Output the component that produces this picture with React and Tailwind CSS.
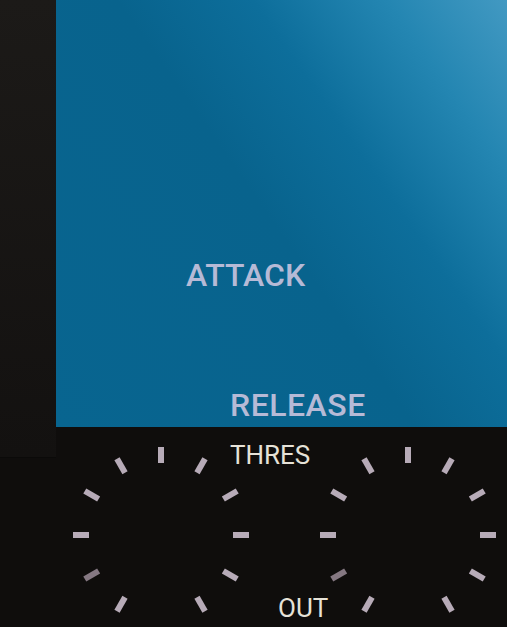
import React from 'react';

// tick angles in degrees, bottom one left out
const ANGLES = [90, 120, 150, 180, 210, 240, 60, 30, 0, -30, -60];

const Knob = ({ className }) => (
  <svg width="180" height="180" viewBox="0 0 180 180" className={className}>
    {ANGLES.map((a) => {
      const r = (a * Math.PI) / 180;
      const x1 = 90 + Math.cos(r) * 72;
      const y1 = 90 - Math.sin(r) * 72;
      const x2 = 90 + Math.cos(r) * 88;
      const y2 = 90 - Math.sin(r) * 88;
      return (
        <line
          key={a}
          x1={x1}
          y1={y1}
          x2={x2}
          y2={y2}
          stroke={a === 210 ? '#857882' : '#b7abb8'}
          strokeWidth="6"
        />
      );
    })}
  </svg>
);

export default function App() {
  return (
    <div className="w-[507px] h-[627px] overflow-hidden bg-[#0f0d0c] font-['Roboto',sans-serif]">
      {/* top: side strip + blue display */}
      <div className="flex h-[427px]">
        <div className="w-[56px] h-[458px] shrink-0 bg-[linear-gradient(to_bottom,#1c1a18,#131110)] border-b border-[#0b0a09]" />
        <div className="flex-1 flex flex-col bg-[linear-gradient(235deg,#4299c2_0%,#2486b2_16%,#0d6e9b_34%,#08638d_52%,#086590_100%)]">
          <div className="ml-[130px] mt-[259px] text-[32px] leading-[32px] font-medium text-[#b6bad6]">
            ATTACK
          </div>
          <div className="ml-[174px] mt-[98px] text-[32px] leading-[32px] font-medium text-[#b6bad6] tracking-[0.5px]">
            RELEASE
          </div>
        </div>
      </div>

      {/* bottom: two knobs with labels between */}
      <div className="relative z-10 flex pt-[18px]">
        <Knob className="ml-[71px] shrink-0" />
        <div className="w-[67px] shrink-0 flex flex-col">
          <div className="ml-[-21px] mt-[-3px] text-[26px] leading-[26px] text-[#e6e2d8] whitespace-nowrap">
            THRES
          </div>
          <div className="ml-[27px] mt-[127px] text-[26px] leading-[26px] text-[#e6e2d8] whitespace-nowrap">
            OUT
          </div>
        </div>
        <Knob className="shrink-0" />
      </div>
    </div>
  );
}
